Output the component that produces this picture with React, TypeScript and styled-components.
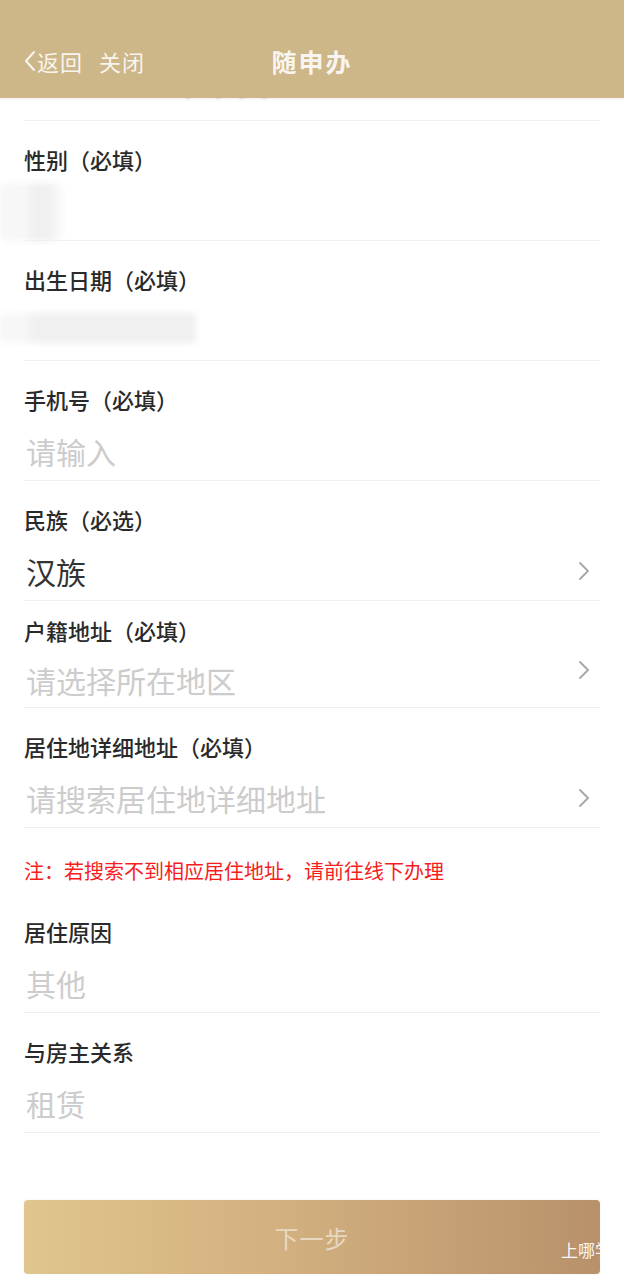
import React from "react";
import styled, { createGlobalStyle } from "styled-components";

const Global = createGlobalStyle`
  html, body { margin: 0; padding: 0; background: #ffffff; }
  body { font-family: "Noto Sans CJK SC", "Noto Sans", sans-serif; }
  * { box-sizing: border-box; }
`;

const Page = styled.div`
  position: relative;
  width: 624px;
  height: 1280px;
  overflow: hidden;
  background: #ffffff;
  font-family: "Noto Sans CJK SC", "Noto Sans", sans-serif;
`;

const Header = styled.header`
  position: absolute;
  top: 0;
  left: 0;
  right: 0;
  height: 98px;
  background: #cdb688;
  box-shadow: 0 1px 2px rgba(0, 0, 0, 0.06);
  display: flex;
  flex-direction: column;
  justify-content: flex-end;
  z-index: 2;
`;

const NavBar = styled.div`
  height: 72px;
  display: grid;
  grid-template-columns: 1fr auto 1fr;
  align-items: center;
  padding: 0 24px;
  padding-bottom: 2px;
  color: rgba(255, 255, 255, 0.88);
`;

const NavLeft = styled.div`
  display: flex;
  align-items: center;
  font-size: 22px;
  line-height: 30px;
`;

const NavLink = styled.span<{ $gap?: number }>`
  margin-left: ${(p) => p.$gap ?? 0}px;
  letter-spacing: 1px;
`;

const Title = styled.div`
  font-size: 25px;
  font-weight: 700;
  letter-spacing: 2px;
  line-height: 30px;
`;

const Content = styled.main`
  display: flex;
  flex-direction: column;
`;

const GhostRow = styled.div`
  height: 121px;
  margin: 0 24px;
  border-bottom: 1px solid #eeeeee;
  display: flex;
  align-items: flex-end;
  padding-bottom: 18px;
  padding-left: 154px;
`;

const GhostText = styled.span`
  font-size: 20px;
  color: #b8b8b8;
  letter-spacing: 3px;
  filter: blur(1.5px);
  line-height: 12px;
`;

const Row = styled.div<{ $compact?: boolean }>`
  margin: 0 24px;
  padding-top: ${(p) => (p.$compact ? 13 : 22)}px;
  padding-bottom: ${(p) => (p.$compact ? 5 : 7)}px;
  border-bottom: 1px solid #eeeeee;
  display: flex;
  flex-direction: column;
  gap: ${(p) => (p.$compact ? 12 : 14)}px;
`;

const Label = styled.div`
  font-size: 22px;
  line-height: 32px;
  font-weight: 500;
  color: #2a2a2a;
  white-space: nowrap;
`;

const ValueLine = styled.div`
  height: 44px;
  display: flex;
  align-items: center;
  justify-content: space-between;
  position: relative;
`;

const Value = styled.span<{ $placeholder?: boolean }>`
  font-size: 30px;
  line-height: 44px;
  padding-left: 2px;
  color: ${(p) => (p.$placeholder ? "#cccccc" : "#333333")};
`;

const Chevron = styled.svg<{ $lift?: number }>`
  width: 12px;
  height: 22px;
  margin-right: 10px;
  transform: translateY(${(p) => -(p.$lift ?? 0)}px);
  flex: none;
`;

const BlurPatch = styled.div<{ $w: number; $h: number; $top: number }>`
  position: relative;
  margin-left: -24px;
  margin-top: ${(p) => p.$top}px;
  width: ${(p) => p.$w}px;
  height: ${(p) => p.$h}px;
  background: #f7f7f7;
  filter: blur(3px);
  border-radius: 6px;
`;

const BlurInner = styled.div<{ $w: number }>`
  margin-left: 30px;
  width: ${(p) => p.$w}px;
  height: 100%;
  background: #f0f0f0;
`;

const Note = styled.div`
  margin: 0 24px;
  padding-top: 33px;
  padding-bottom: 12px;
  font-size: 20px;
  line-height: 20px;
  color: #f51d1d;
  white-space: nowrap;
`;

const Button = styled.button`
  margin: 67px 24px 0;
  height: 74px;
  border: none;
  border-radius: 4px;
  background: linear-gradient(90deg, #e0c58f 0%, #d2b07f 45%, #b8916a 100%);
  color: rgba(255, 255, 255, 0.55);
  font-family: "Noto Sans CJK SC", "Noto Sans", sans-serif;
  font-size: 24px;
  letter-spacing: 1px;
  box-shadow: 0 0 2px rgba(0, 0, 0, 0.08);
`;

const Watermark = styled.div`
  position: absolute;
  left: 561px;
  top: 1240px;
  font-size: 17px;
  line-height: 20px;
  color: rgba(255, 255, 255, 0.95);
  white-space: nowrap;
  z-index: 3;
`;

const ChevronRight = ({ lift }: { lift?: number }) => (
  <Chevron $lift={lift} viewBox="0 0 12 22" fill="none">
    <path d="M2 3 L10 11 L2 19" stroke="#a6a6a6" strokeWidth="1.8" strokeLinecap="round" strokeLinejoin="round" />
  </Chevron>
);

const BackArrow = styled.svg`
  width: 12px;
  height: 22px;
  margin-right: 1px;
`;

export default function App() {
  return (
    <Page>
      <Global />
      <Header>
        <NavBar>
          <NavLeft>
            <BackArrow viewBox="0 0 12 22" fill="none">
              <path d="M10 2 L2 11 L10 20" stroke="rgba(255,255,255,0.88)" strokeWidth="2" strokeLinecap="round" strokeLinejoin="round" />
            </BackArrow>
            <NavLink>返回</NavLink>
            <NavLink $gap={16}>关闭</NavLink>
          </NavLeft>
          <Title>随申办</Title>
          <div />
        </NavBar>
      </Header>

      <Content>
        <GhostRow>
          <GhostText>• •••</GhostText>
        </GhostRow>

        <Row>
          <Label>性别（必填）</Label>
          <ValueLine>
            <BlurPatch $w={62} $h={58} $top={2}>
              <BlurInner $w={22} />
            </BlurPatch>
          </ValueLine>
        </Row>

        <Row>
          <Label>出生日期（必填）</Label>
          <ValueLine>
            <BlurPatch $w={196} $h={30} $top={-6}>
              <BlurInner $w={166} />
            </BlurPatch>
          </ValueLine>
        </Row>

        <Row>
          <Label>手机号（必填）</Label>
          <ValueLine>
            <Value $placeholder>请输入</Value>
          </ValueLine>
        </Row>

        <Row>
          <Label>民族（必选）</Label>
          <ValueLine>
            <Value>汉族</Value>
            <ChevronRight />
          </ValueLine>
        </Row>

        <Row $compact>
          <Label>户籍地址（必填）</Label>
          <ValueLine>
            <Value $placeholder>请选择所在地区</Value>
            <ChevronRight lift={10} />
          </ValueLine>
        </Row>

        <Row>
          <Label>居住地详细地址（必填）</Label>
          <ValueLine>
            <Value $placeholder>请搜索居住地详细地址</Value>
            <ChevronRight />
          </ValueLine>
        </Row>

        <Note>注：若搜索不到相应居住地址，请前往线下办理</Note>

        <Row>
          <Label>居住原因</Label>
          <ValueLine>
            <Value $placeholder>其他</Value>
          </ValueLine>
        </Row>

        <Row>
          <Label>与房主关系</Label>
          <ValueLine>
            <Value $placeholder>租赁</Value>
          </ValueLine>
        </Row>

        <Button>下一步</Button>
      </Content>

      <Watermark>上哪学</Watermark>
    </Page>
  );
}
